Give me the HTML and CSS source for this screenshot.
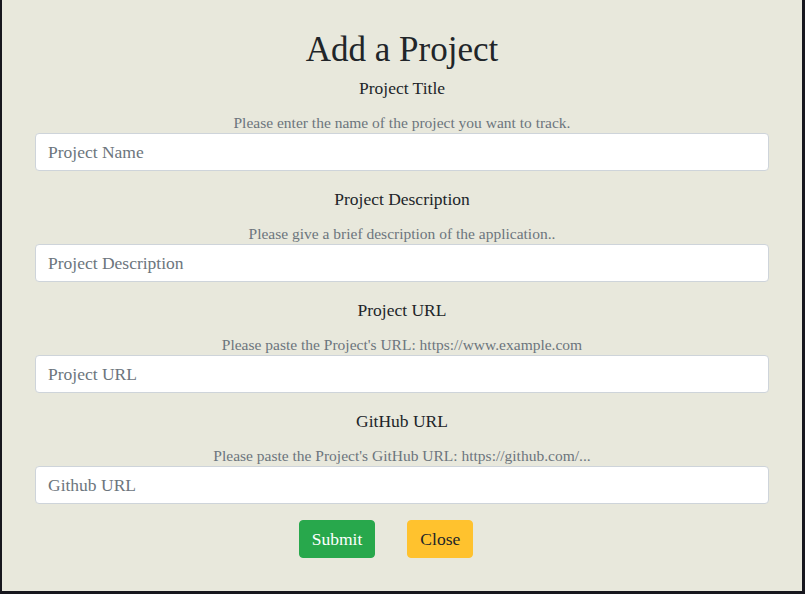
FILE: index.html
```html
<!DOCTYPE html>
<html lang="en">
<head>
<meta charset="utf-8">
<title>Add a Project</title>
<link rel="stylesheet" href="styles.css">
</head>
<body>
<div class="panel">
  <h1 class="title">Add a Project</h1>
  <form class="form">
    <div class="group">
      <label class="label" for="name">Project Title</label>
      <small class="help">Please enter the name of the project you want to track.</small>
      <input class="field" id="name" type="text" placeholder="Project Name">
    </div>
    <div class="group">
      <label class="label" for="desc">Project Description</label>
      <small class="help">Please give a brief description of the application..</small>
      <input class="field" id="desc" type="text" placeholder="Project Description">
    </div>
    <div class="group">
      <label class="label" for="url">Project URL</label>
      <small class="help">Please paste the Project's URL: https://www.example.com</small>
      <input class="field" id="url" type="text" placeholder="Project URL">
    </div>
    <div class="group">
      <label class="label" for="gh">GitHub URL</label>
      <small class="help">Please paste the Project's GitHub URL: https://github.com/...</small>
      <input class="field" id="gh" type="text" placeholder="Github URL">
    </div>
    <div class="actions">
      <button type="button" class="btn btn-submit">Submit</button>
      <button type="button" class="btn btn-close">Close</button>
    </div>
  </form>
</div>
</body>
</html>
```
FILE: styles.css
```css
* { box-sizing: border-box; }
html, body {
  margin: 0;
  padding: 0;
  background: #17171e;
  height: 594px;
  overflow: hidden;
}
body {
  font-family: "Liberation Serif", "Times New Roman", serif;
  color: #212529;
}
.panel {
  margin-left: 2px;
  width: 800px;
  height: 591px;
  background: #e8e8dc;
  padding: 29px 33px 0 33px;
}
.title {
  margin: 0;
  font-size: 35px;
  line-height: 42px;
  font-weight: 400;
  text-align: center;
}
.form {
  display: flex;
  flex-direction: column;
  margin-top: 5px;
}
.group {
  display: flex;
  flex-direction: column;
  align-items: center;
  margin-bottom: 16px;
}
.label {
  font-size: 17.5px;
  line-height: 24px;
  margin-bottom: 13px;
}
.help {
  font-size: 15.5px;
  line-height: 20px;
  color: #6c757d;
}
.field {
  width: 100%;
  height: 38px;
  border: 1px solid #ced4da;
  border-radius: 4px;
  background: #fff;
  padding: 0 12px;
  font-family: inherit;
  font-size: 17.5px;
  color: #495057;
}
.field::placeholder { color: #6c757d; opacity: 1; }
.actions {
  display: flex;
  justify-content: center;
}
.btn {
  height: 38px;
  padding: 6px 12px;
  line-height: 24px;
  font-family: inherit;
  font-size: 17.5px;
  border: 1px solid transparent;
  border-radius: 4px;
  margin-right: 32px;
}
.btn-submit { background: #28a84c; border-color: #28a84c; color: #fff; }
.btn-close { background: #ffc22e; border-color: #ffc22e; color: #212529; }
```
